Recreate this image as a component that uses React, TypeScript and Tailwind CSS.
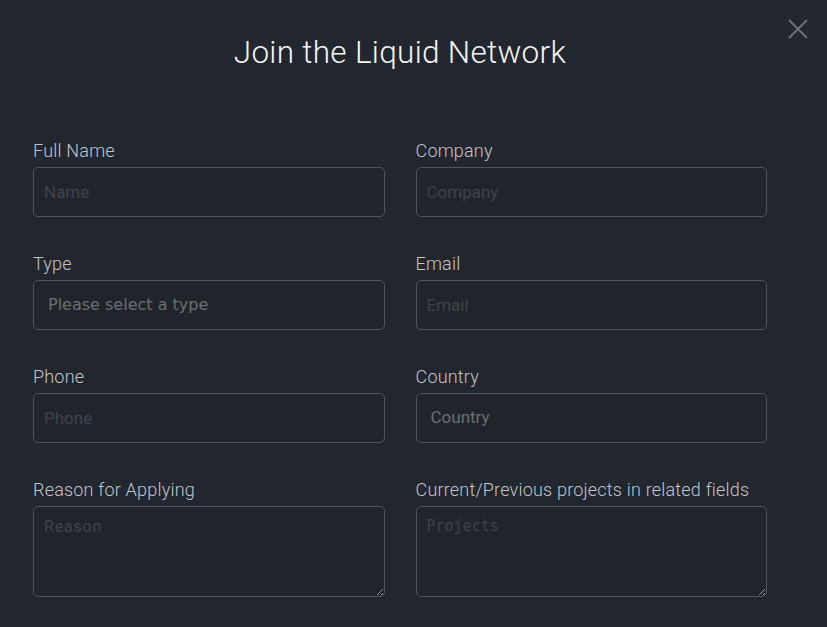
import React from "react";

const Label: React.FC<{ text: string }> = ({ text }) => (
  <label className="block text-[18px] leading-[20px] font-light text-[#c2c5ca] mb-[6px] tracking-[0.2px]">{text}</label>
);

const inputCls =
  "w-full h-[50px] rounded-[5px] border border-[#50545b] bg-[#21242b] px-[10px] text-[17px] text-[#c9ccd1] outline-none placeholder:text-[#3f434b] font-['Roboto',sans-serif]";

const selectCls =
  "w-full h-[50px] rounded-[5px] border border-[#50545b] bg-[#21242b] px-[14px] flex items-center text-[16px] text-[#6b6e73]";

const App: React.FC = () => {
  return (
    <div className="min-h-[627px] bg-[#22262e] font-['Roboto',sans-serif] relative">
      <button className="absolute right-[19px] top-[19px] w-[20px] h-[20px] text-[#6d7179]">
        <svg viewBox="0 0 20 20" width="20" height="20" stroke="currentColor" strokeWidth="1.8" fill="none">
          <path d="M1 1L19 19M19 1L1 19" />
        </svg>
      </button>
      <div className="w-[800px] px-[33px]">
        <h1 className="pt-[33px] text-center text-[31.5px] leading-[40px] font-light text-[#f3f4f6] tracking-[0.3px]">
          Join the Liquid Network
        </h1>
        <div className="mt-[68px] grid grid-cols-2 gap-x-[31px] gap-y-[37px]">
          <div>
            <Label text="Full Name" />
            <input className={inputCls} placeholder="Name" />
          </div>
          <div>
            <Label text="Company" />
            <input className={inputCls} placeholder="Company" />
          </div>
          <div>
            <Label text="Type" />
            <div className={selectCls + " font-['DejaVu_Sans',sans-serif]"}>Please select a type</div>
          </div>
          <div>
            <Label text="Email" />
            <input className={inputCls} placeholder="Email" />
          </div>
          <div>
            <Label text="Phone" />
            <input className={inputCls} placeholder="Phone" />
          </div>
          <div>
            <Label text="Country" />
            <div className={selectCls + " font-['Roboto',sans-serif] text-[17px]"}>Country</div>
          </div>
          <div>
            <Label text="Reason for Applying" />
            <textarea
              className="block w-full h-[91px] rounded-[5px] border border-[#50545b] bg-[#21242b] px-[10px] py-[8px] text-[16px] text-[#c9ccd1] outline-none placeholder:text-[#3f434b] tracking-[0.8px] font-['Roboto',sans-serif]"
              placeholder="Reason"
            />
          </div>
          <div>
            <Label text="Current/Previous projects in related fields" />
            <textarea
              className="block w-full h-[91px] rounded-[5px] border border-[#50545b] bg-[#21242b] px-[10px] py-[8px] text-[15px] text-[#c9ccd1] outline-none placeholder:text-[#3f434b] font-['DejaVu_Sans_Mono',monospace]"
              placeholder="Projects"
            />
          </div>
        </div>
      </div>
    </div>
  );
};

export default App;
